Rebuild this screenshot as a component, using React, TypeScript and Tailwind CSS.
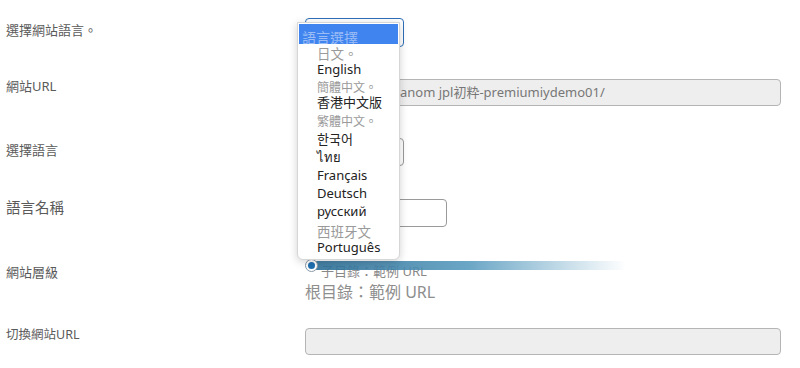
const font = { fontFamily: '"Noto Sans", "Noto Sans CJK TC", sans-serif' };

type Opt = { label: string; muted?: boolean; cls: string };

const options: Opt[] = [
  { label: '日文。', muted: true, cls: 'text-[13.5px]' },
  { label: 'English', cls: '' },
  { label: '簡體中文。', muted: true, cls: 'mt-[4px] text-[12px]' },
  { label: '香港中文版', cls: '' },
  { label: '繁體中文。', muted: true, cls: 'mt-[5px] text-[12px]' },
  { label: '한국어', cls: 'mt-[3px]' },
  { label: 'ไทย', cls: 'mt-[2px]' },
  { label: 'Français', cls: 'mt-[2px]' },
  { label: 'Deutsch', cls: 'mt-[2px]' },
  { label: 'русский', cls: 'mt-[2px]' },
  { label: '西班牙文', muted: true, cls: 'mt-[7px] text-[13.5px]' },
  { label: 'Português', cls: '' },
];

function LanguageMenu() {
  return (
    <div className="absolute left-[-8px] top-[4px] z-20 w-[103px] rounded-b-md border border-[#d6d6d6] bg-white pb-[4px] shadow-[0_2px_8px_rgba(0,0,0,0.18)]">
      <div className="mx-[1px] mt-[1px] h-[20px] overflow-hidden bg-[#3f84ef] pl-[3px] text-[14px] leading-[27px] text-[#9cbdf5]">
        語言選擇
      </div>
      <div className="pl-[19px] pt-[4px]">
        {options.map((o) => (
          <div
            key={o.label}
            className={`${o.cls} ${o.muted ? 'leading-[13px] text-[#9a9a9a]' : 'text-[13px] leading-[16px] text-[#222]'}`}
          >
            {o.label}
          </div>
        ))}
      </div>
    </div>
  );
}

export default function App() {
  return (
    <div className="h-[368px] w-[800px] overflow-hidden bg-white text-[#5a5a5a]" style={font}>
      <div className="flex pt-[18px]">
        <div className="w-[305px] shrink-0 pl-[6px] pt-[3px] text-[13px] leading-[18px]">選擇網站語言。</div>
        <div className="relative">
          <div className="h-[29px] w-[99px] rounded-[4px] border border-[#2f6fb8] bg-white" />
          <LanguageMenu />
        </div>
      </div>

      <div className="mt-[32px] flex">
        <div className="w-[305px] shrink-0 -mt-[2px] pl-[6px] text-[13px] leading-[18px]">網站URL</div>
        <div className="h-[27px] w-[476px] rounded-[4px] border border-[#b5b5b5] bg-[#eeeeee] pl-[94px] text-[13px] leading-[25px] text-[#777]">
          anom jpl初粋-premiumiydemo01/
        </div>
      </div>

      <div className="mt-[32px] flex">
        <div className="w-[305px] shrink-0 pl-[6px] pt-[3px] text-[13px] leading-[18px]">選擇語言</div>
        <div className="h-[28px] w-[99px] rounded-[4px] border border-[#9a9a9a] bg-white" />
      </div>

      <div className="mt-[33px] flex">
        <div className="w-[305px] shrink-0 -mt-[2px] pl-[6px] text-[14.5px] leading-[20px]">語言名稱</div>
        <div className="h-[28px] w-[142px] rounded-[4px] border border-[#9a9a9a] bg-white" />
      </div>

      <div className="mt-[35px] flex">
        <div className="w-[305px] shrink-0 pt-[1px] pl-[6px] text-[13px] leading-[18px]">網站層級</div>
        <div className="relative">
          <div className="pl-[16px] pt-[1px] text-[13px] leading-[16px] text-[#888]">子目錄：範例 URL</div>
          <div className="absolute left-[6px] top-[-1px] h-[9px] w-[315px] rounded-full bg-gradient-to-r from-[#2c6f97] via-[#5a9cbf] to-transparent opacity-90" />
          <div className="absolute left-0 top-[-3px] flex h-[13px] w-[13px] items-center justify-center rounded-full border border-[#8a9aa6] bg-white">
            <div className="h-[7px] w-[7px] rounded-full bg-[#1f6fb0]" />
          </div>
          <div className="pt-[3px] text-[16px] leading-[20px] text-[#8e8e8e]">根目錄：範例 URL</div>
        </div>
      </div>

      <div className="mt-[26px] flex">
        <div className="w-[305px] shrink-0 -mt-[2px] pl-[6px] text-[12.5px] leading-[18px]">切換網站URL</div>
        <div className="h-[27px] w-[476px] rounded-[4px] border border-[#b5b5b5] bg-[#eeeeee]" />
      </div>
    </div>
  );
}
